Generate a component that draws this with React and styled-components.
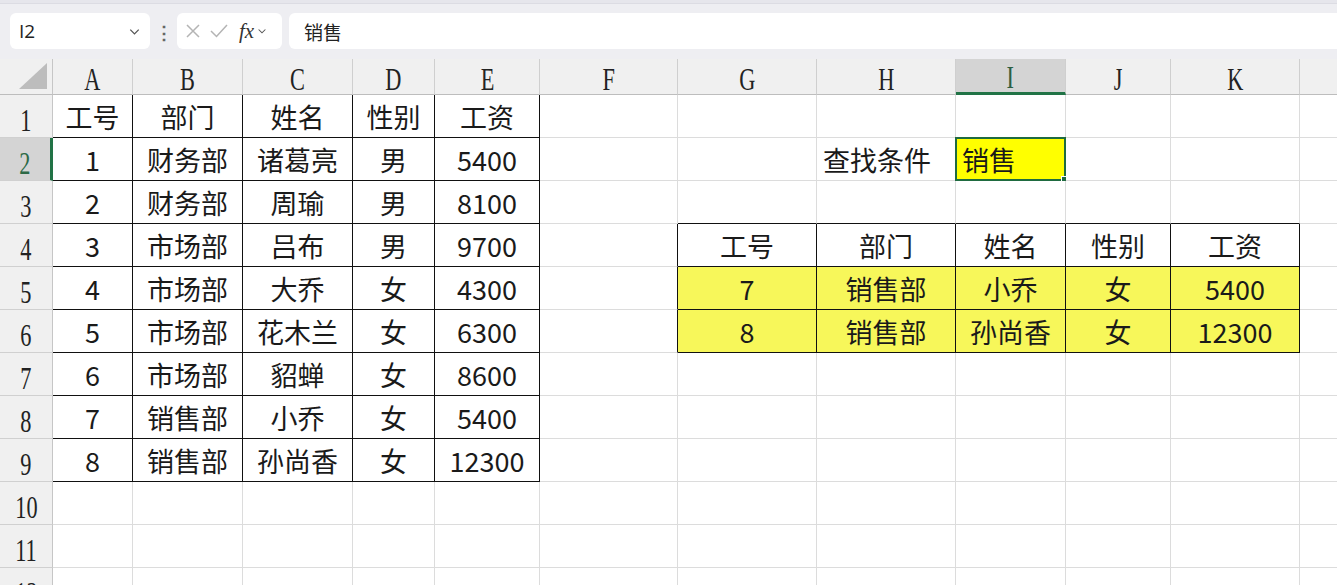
import styled, { createGlobalStyle } from 'styled-components'

const GlobalStyle = createGlobalStyle`
    html, body {
        margin: 0;
        padding: 0;
        background: #fff;
        overflow: hidden;
    }
    * {
        box-sizing: border-box;
    }
`

const COLS = ['A', 'B', 'C', 'D', 'E', 'F', 'G', 'H', 'I', 'J', 'K', 'L']
const WIDTHS = [80, 110, 110, 82, 105, 138, 139, 139, 110, 105, 129, 100]
const ROWS = 12

const header = ['工号', '部门', '姓名', '性别', '工资']
const staff = [
    ['1', '财务部', '诸葛亮', '男', '5400'],
    ['2', '财务部', '周瑜', '男', '8100'],
    ['3', '市场部', '吕布', '男', '9700'],
    ['4', '市场部', '大乔', '女', '4300'],
    ['5', '市场部', '花木兰', '女', '6300'],
    ['6', '市场部', '貂蝉', '女', '8600'],
    ['7', '销售部', '小乔', '女', '5400'],
    ['8', '销售部', '孙尚香', '女', '12300'],
]
const result = staff.filter(r => r[1].includes('销售'))

// cell contents keyed by "row:colIndex"
const cells = {}
;[header, ...staff].forEach((r, i) => r.forEach((v, j) => { cells[`${i + 1}:${j}`] = v }))
;[header, ...result].forEach((r, i) => r.forEach((v, j) => { cells[`${i + 4}:${j + 6}`] = v }))
cells['2:7'] = '查找条件'
cells['2:8'] = '销售'

const inLeft = (r, c) => r >= 1 && r <= 9 && c >= 0 && c <= 4
const inRight = (r, c) => r >= 4 && r <= 6 && c >= 6 && c <= 10
const inTable = (r, c) => inLeft(r, c) || inRight(r, c)

const SELECTED_ROW = 2
const SELECTED_COL = 8

const ChevronDown = ({ size = 14 }) => (
    <svg width={size} height={size} viewBox="0 0 16 16" fill="none" stroke="#555" strokeWidth="1.4">
        <path d="M3.5 6 L8 10.5 L12.5 6" />
    </svg>
)

const App = () => {
    return (
        <Page>
            <GlobalStyle />
            <TopStrip />
            <FormulaBar>
                <NameBox>
                    <span>I2</span>
                    <ChevronDown size={15} />
                </NameBox>
                <Dots>⋮</Dots>
                <FxBox>
                    <svg width="18" height="18" viewBox="0 0 18 18" stroke="#b4b4b4" strokeWidth="1.5" fill="none">
                        <path d="M3 3 L15 15 M15 3 L3 15" />
                    </svg>
                    <svg width="20" height="18" viewBox="0 0 20 18" stroke="#b4b4b4" strokeWidth="1.5" fill="none">
                        <path d="M2 9 L7.5 14.5 L18 3" />
                    </svg>
                    <Fx>fx</Fx>
                    <ChevronDown size={12} />
                </FxBox>
                <FormulaInput>销售</FormulaInput>
            </FormulaBar>

            <Sheet $widths={WIDTHS}>
                <Corner>
                    <svg width="30" height="28" viewBox="0 0 30 28">
                        <polygon points="28,0 28,26 0,26" fill="#bdbdbd" />
                    </svg>
                </Corner>
                {COLS.map((c, i) => (
                    <ColHeader key={c} $active={i === SELECTED_COL}>
                        <Label>{c}</Label>
                    </ColHeader>
                ))}

                {Array.from({ length: ROWS }, (_, k) => {
                    const r = k + 1
                    return [
                        <RowHeader key={`h${r}`} $active={r === SELECTED_ROW}>
                            <Label>{r}</Label>
                        </RowHeader>,
                        ...COLS.map((_, c) => {
                            const value = cells[`${r}:${c}`]
                            const isSel = r === SELECTED_ROW && c === SELECTED_COL
                            let fill
                            if (isSel) fill = '#ffff00'
                            else if (inRight(r, c) && r > 4) fill = '#f7f75a'
                            return (
                                <Cell
                                    key={`${r}:${c}`}
                                    $blackRight={inTable(r, c) || inTable(r, c + 1)}
                                    $blackBottom={inTable(r, c) || inTable(r + 1, c)}
                                    $fill={fill}
                                    $align={r === 2 && (c === 7 || c === 8) ? 'left' : 'center'}
                                    $selected={isSel}
                                >
                                    {value}
                                </Cell>
                            )
                        }),
                    ]
                })}
            </Sheet>
        </Page>
    )
}

const Page = styled.div`
    width: 1337px;
    height: 585px;
    overflow: hidden;
    background: #fff;
    font-family: "Noto Sans CJK SC", "Noto Sans", sans-serif;
`

const TopStrip = styled.div`
    height: 4px;
    background: #e6e6ec;
    border-bottom: 1px solid #dcdce3;
`

const FormulaBar = styled.div`
    height: 55px;
    background: #eeeef2;
    display: flex;
    align-items: flex-start;
    padding: 9px 0 0 10px;
`

const NameBox = styled.div`
    width: 140px;
    height: 36px;
    background: #fff;
    border-radius: 6px;
    display: flex;
    align-items: center;
    justify-content: space-between;
    padding: 0 8px 0 9px;
    font-family: "Open Sans", "Noto Sans", sans-serif;
    font-size: 19px;
    color: #222;
`

const Dots = styled.div`
    width: 27px;
    height: 36px;
    display: flex;
    align-items: center;
    justify-content: center;
    color: #666;
    font-size: 18px;
    font-weight: bold;
`

const FxBox = styled.div`
    width: 105px;
    height: 36px;
    background: #fff;
    border-radius: 6px;
    display: flex;
    align-items: center;
    gap: 7px;
    padding: 0 0 0 7px;
`

const Fx = styled.span`
    font-family: "Liberation Serif", "DejaVu Serif", serif;
    font-style: italic;
    font-size: 21px;
    color: #333;
    margin-left: 3px;
    margin-right: -5px;
    line-height: 1;
`

const FormulaInput = styled.div`
    flex: 1;
    height: 36px;
    margin-left: 7px;
    background: #fff;
    border-radius: 6px 0 0 6px;
    display: flex;
    align-items: center;
    padding-left: 15px;
    font-size: 19px;
    color: #222;
`

const Sheet = styled.div`
    display: grid;
    grid-template-columns: 53px ${p => p.$widths.map(w => `${w}px`).join(' ')};
    grid-template-rows: 36px;
    grid-auto-rows: 43px;
`

const Corner = styled.div`
    background: #f0f0f0;
    border-right: 1px solid #c6c6c6;
    border-bottom: 1px solid #bdbdbd;
    display: flex;
    align-items: flex-end;
    justify-content: flex-end;
    padding: 0 3px 3px 0;
`

const Label = styled.span`
    display: inline-block;
    font-family: "Liberation Serif", "DejaVu Serif", serif;
    transform: scaleX(0.72);
    line-height: 1;
`

const ColHeader = styled.div`
    background: ${p => (p.$active ? '#d4d4d4' : '#f0f0f0')};
    border-right: 1px solid #cfcfcf;
    border-bottom: ${p => (p.$active ? '3px solid #217346' : '1px solid #bdbdbd')};
    display: flex;
    align-items: center;
    justify-content: center;
    padding-top: ${p => (p.$active ? '4px' : '6px')};
    font-size: 31px;
    color: ${p => (p.$active ? '#2d5e41' : '#222')};
`

const RowHeader = styled.div`
    background: ${p => (p.$active ? '#d4d4d4' : '#f0f0f0')};
    border-right: ${p => (p.$active ? '3px solid #217346' : '1px solid #c6c6c6')};
    border-bottom: 1px solid #d0d0d0;
    display: flex;
    align-items: center;
    justify-content: center;
    padding-top: 8px;
    font-size: 31px;
    color: ${p => (p.$active ? '#2d6a47' : '#222')};
`

const Cell = styled.div`
    position: relative;
    background: ${p => p.$fill || '#fff'};
    border-right: 1px solid ${p => (p.$blackRight ? '#111' : '#dcdcdc')};
    border-bottom: 1px solid ${p => (p.$blackBottom ? '#111' : '#dcdcdc')};
    display: flex;
    align-items: center;
    justify-content: ${p => (p.$align === 'left' ? 'flex-start' : 'center')};
    padding: 0 6px;
    font-size: 27px;
    color: #1a1a1a;
    white-space: nowrap;

    ${p => p.$selected && `
        &::before {
            content: '';
            position: absolute;
            left: -1px;
            top: -1px;
            right: -1px;
            bottom: -1px;
            border: 2px solid #1f6b40;
            pointer-events: none;
        }
        &::after {
            content: '';
            position: absolute;
            right: -4px;
            bottom: -4px;
            width: 6px;
            height: 6px;
            background: #1f6b40;
            border: 1px solid #fff;
        }
    `}
`

export default App
